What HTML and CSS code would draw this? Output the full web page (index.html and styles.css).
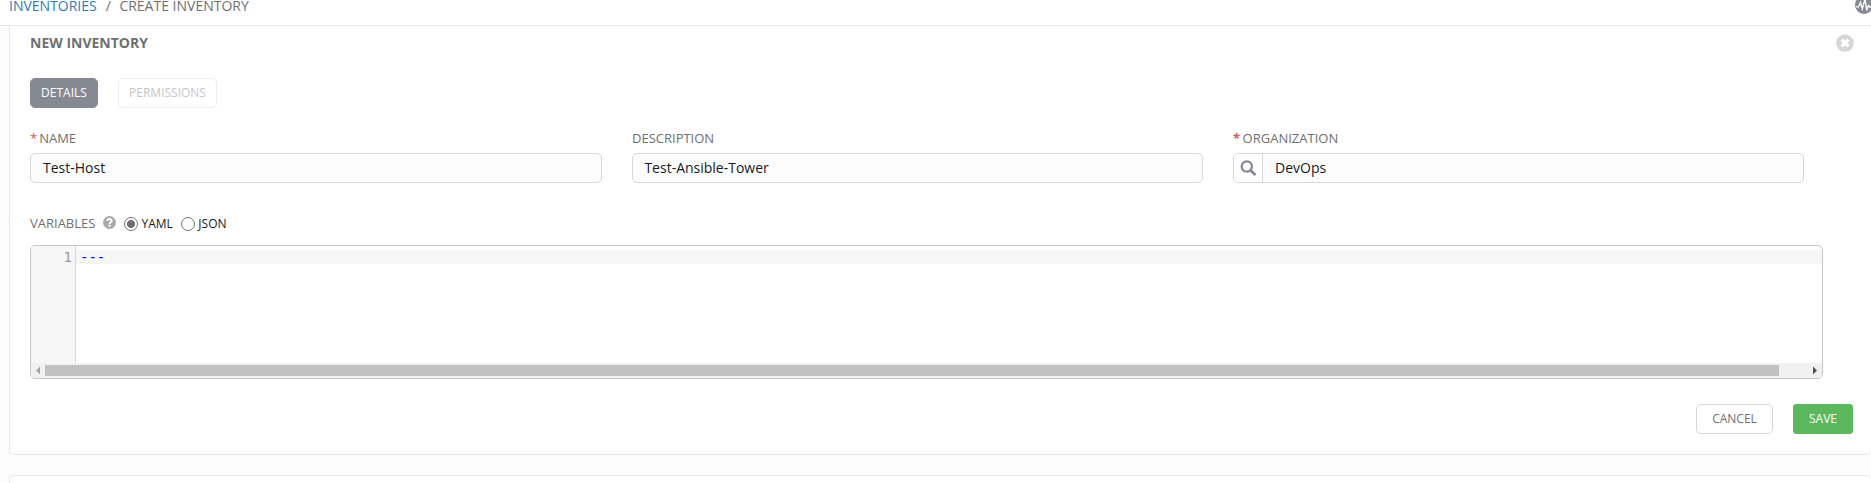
FILE: index.html
```html
<!DOCTYPE html>
<html lang="en">
<head>
<meta charset="utf-8">
<title>Create Inventory</title>
<link rel="stylesheet" href="styles.css">
</head>
<body>
<header class="crumbs">
  <div class="crumb-list"><a class="crumb-link">INVENTORIES</a><span class="crumb-sep">/</span><span>CREATE INVENTORY</span></div>
  <svg class="activity" width="18" height="18" viewBox="0 0 18 18"><circle cx="9" cy="9" r="9" fill="#848992"/><path d="M1 10.8H3.5L5.5 6.5L7.3 13L10 3L11.7 14.5L13.3 9.5L14.5 11H17" fill="none" stroke="#fff" stroke-width="1.3"/></svg>
</header>
<main class="panel">
  <div class="panel-head">
    <h1 class="title">NEW INVENTORY</h1>
    <svg class="close" width="18" height="18" viewBox="0 0 18 18"><circle cx="9" cy="9" r="8.8" fill="#d7d7d7"/><path d="M5.7 5.7L12.3 12.3M12.3 5.7L5.7 12.3" stroke="#fff" stroke-width="3.3"/></svg>
  </div>
  <div class="tabs"><button class="btn tab-active">DETAILS</button><button class="btn tab-off">PERMISSIONS</button></div>
  <div class="fields">
    <div class="field"><label class="label"><span class="star">*</span>NAME</label><div class="input">Test-Host</div></div>
    <div class="field"><label class="label">DESCRIPTION</label><div class="input description">Test-Ansible-Tower</div></div>
    <div class="field"><label class="label"><span class="star star-bold">*</span>ORGANIZATION</label>
      <div class="input lookup"><span class="lookup-btn"><svg width="16" height="16" viewBox="0 0 16 16" fill="none" stroke="#848992"><circle cx="6.8" cy="6.5" r="5.1" stroke-width="2.3"/><path d="M10.5 10.2L14.6 14.3" stroke-width="2.7" stroke-linecap="round"/></svg></span><span class="lookup-value">DevOps</span></div>
    </div>
  </div>
  <div class="variables">
    <span class="label var-label">VARIABLES</span>
    <svg class="help" width="13" height="13" viewBox="0 0 12 12"><circle cx="6" cy="6" r="6" fill="#aaa"/><path d="M4 4.7C4 2.2 8 2.2 8 4.5C8 5.8 6.1 5.6 6.1 7.3" fill="none" stroke="#fff" stroke-width="1.7"/><path d="M5.2 8.1H7V9.8H5.2Z" fill="#fff"/></svg>
    <span class="radio radio-on"></span><span class="radio-text yaml">YAML</span>
    <span class="radio"></span><span class="radio-text">JSON</span>
  </div>
  <div class="editor">
    <div class="code">
      <div class="gutter">1</div>
      <div class="lines"><div class="line">---</div></div>
    </div>
    <div class="scrollbar">
      <svg class="arrow" width="14" height="15" viewBox="0 0 14 15"><path d="M5 7.5L9 3.5V11.5Z" fill="#a3a3a3"/></svg>
      <div class="track"><div class="thumb"></div></div>
      <svg class="arrow" width="14" height="15" viewBox="0 0 14 15"><path d="M9 7.5L5 3.5V11.5Z" fill="#505050"/></svg>
    </div>
  </div>
  <div class="actions"><button class="btn cancel">CANCEL</button><button class="btn save">SAVE</button></div>
</main>
<section class="panel-next"></section>
</body>
</html>
```
FILE: styles.css
```css
* { box-sizing: border-box; }
body {
  margin: 0;
  height: 483px;
  overflow: hidden;
  background: #fcfcfc;
  color: #707070;
  font-family: "Open Sans", "Noto Sans", sans-serif;
  font-size: 14px;
}
.crumbs {
  height: 26px;
  display: flex;
  justify-content: space-between;
  background: #fff;
  border-bottom: 1px solid #e8e8e8;
}
.crumb-list { margin: 0 0 0 9px; line-height: 12px; white-space: nowrap; }
.crumb-link { color: #337ab7; }
.crumb-sep { margin: 0 8.5px 0 9px; }
.activity { margin: -4px -2px 0 0; flex: none; }
.panel {
  height: 429px;
  margin-left: 9px;
  padding: 0 17.5px 0 20px;
  background: #fff;
  border: solid #e8e8e8;
  border-width: 0 0 1px 1px;
  border-radius: 0 0 5px 5px;
}
.panel-head { height: 52px; display: flex; justify-content: space-between; }
.title { margin: 7px 0 0; font-size: 14px; line-height: 20px; font-weight: 700; }
.close { margin: 8px 0 0; }
.tabs { display: flex; gap: 20px; }
.btn {
  height: 30px;
  padding: 0;
  border: 1px solid #d7d7d7;
  border-radius: 5px;
  background: #fff;
  color: #707070;
  font: 12px/28px "Open Sans", "Noto Sans", sans-serif;
}
.tab-active { width: 68px; background: #848992; border-color: #848992; color: #fff; }
.tab-off { width: 99px; border-color: #ededed; color: #c6c6c6; }
.fields {
  display: grid;
  grid-template-columns: 572px 571px 571px;
  column-gap: 30px;
  margin-top: 20px;
}
.label { display: block; height: 25px; line-height: 20px; font-size: 13px; white-space: nowrap; }
.star { color: #d9534f; margin-right: 2px; }
.star-bold { font-weight: 700; margin-right: 2.5px; }
.input {
  height: 30px;
  padding: 0 12px;
  border: 1px solid #d7d7d7;
  border-radius: 5px;
  background: #fcfcfc;
  color: #161b1f;
  line-height: 28px;
}
.description { padding-left: 11.4px; }
.lookup { display: flex; padding: 0; overflow: hidden; }
.lookup-btn {
  width: 29px;
  display: flex;
  align-items: center;
  justify-content: center;
  background: #fff;
  border-right: 1px solid #d7d7d7;
}
.lookup-value { padding-left: 12px; }
.variables { height: 20px; margin-top: 30px; display: flex; align-items: center; }
.var-label { height: 20px; width: 73px; }
.help { margin: 0 8px 1px 0; }
.radio { width: 14px; height: 14px; margin-top: 1px; border: 1px solid #767676; border-radius: 50%; background: #fff; }
.radio-on { background: radial-gradient(circle, #707070 0 3.7px, #fff 4.4px); }
.radio-text { margin: 1px 0 0 3.5px; font-size: 12px; line-height: 20px; color: #161b1f; }
.yaml { margin-right: 8px; }
.editor {
  width: 1793px;
  height: 134px;
  margin-top: 12px;
  border: 1px solid #c6c6c6;
  border-radius: 5px;
  overflow: hidden;
}
.code { height: 117px; display: flex; font: 14px/14px "DejaVu Sans Mono", monospace; }
.gutter {
  width: 45px;
  padding: 4px 3px 0 0;
  border-right: 1px solid #d7d7d7;
  background: #f6f6f6;
  color: #999;
  text-align: right;
}
.lines { flex: 1; padding-top: 4px; }
.line { height: 14px; padding-left: 4px; background: #f6f6f6; color: #00f; }
.scrollbar { height: 15px; display: flex; align-items: center; background: #f1f1f1; }
.arrow { flex: none; }
.track { flex: 1; }
.thumb { width: 1734px; height: 11px; background: #c1c1c1; }
.actions { display: flex; justify-content: flex-end; gap: 20px; margin: 25px 0.5px 0 0; }
.cancel { width: 77px; }
.save { width: 60px; background: #5cb85c; border-color: #5cb85c; border-radius: 3px; color: #fff; }
.panel-next {
  height: 8px;
  margin: 20px 0 0 9px;
  background: #fff;
  border: solid #e8e8e8;
  border-width: 1px 0 0 1px;
  border-radius: 5px 5px 0 0;
}
```
